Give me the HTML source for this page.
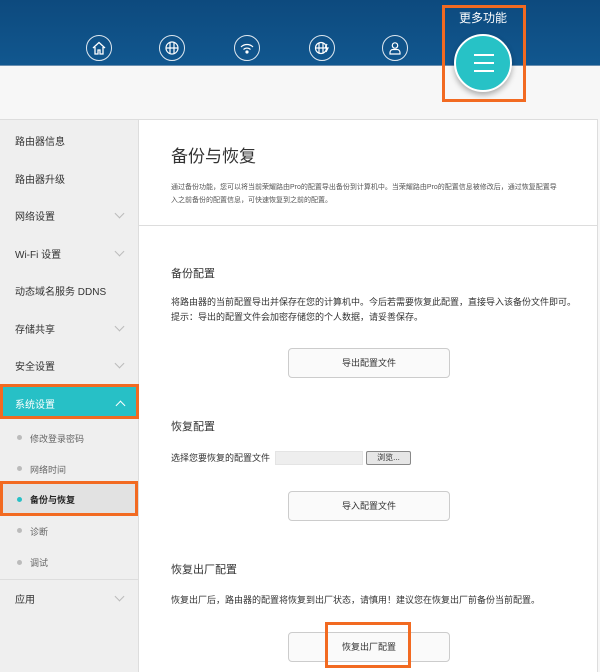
<!DOCTYPE html>
<html><head><meta charset="utf-8"><style>
*{margin:0;padding:0;box-sizing:border-box}
body{width:600px;height:672px;overflow:hidden;background:#f7f7f7;font-family:"Liberation Sans","Noto Sans CJK SC",sans-serif;position:relative;color:#333}
.hdr{position:absolute;left:0;top:0;width:600px;height:66px;background:linear-gradient(#0d4a7e,#11578f);border-bottom:1px solid #6a8fb0}
.ic{position:absolute;top:35px;width:26px;height:26px;border:1.3px solid #dfe8f0;border-radius:50%}
.ic svg{position:absolute;left:4px;top:4px}
.side{position:absolute;left:0;top:119px;width:139px;height:553px;background:#efefef;border-right:1px solid #ddd;border-top:1px solid #ddd}
.it{position:absolute;left:15px;font-size:10px;color:#333}
.chev{position:absolute;left:116px;width:7px;height:7px;border-right:1px solid #bbb;border-bottom:1px solid #bbb;transform:rotate(45deg)}
.sub{position:absolute;left:30px;font-size:9px;color:#666}
.dot{position:absolute;left:17px;width:5px;height:5px;border-radius:50%;background:#bbb}
.main{position:absolute;left:139px;top:119px;width:459px;height:553px;background:#fff;border-right:1px solid #ddd;border-top:1px solid #ddd}
.t{position:absolute;left:171px;font-size:11px;color:#333}
.p{position:absolute;left:171px;font-size:9px;color:#333;line-height:15px}
.btn{position:absolute;left:288px;width:162px;height:30px;border:1px solid #ccc;border-radius:4px;background:#fafafa;font-size:9px;text-align:center;line-height:28px;color:#333}
.ob{position:absolute;border:3px solid #f26a21}
</style></head><body>
<div class="hdr">
<div style="position:absolute;left:459px;top:9px;color:#fff;font-size:12px">更多功能</div>
<div class="ic" style="left:86px"><svg width="16" height="16" viewBox="0 0 16 16" fill="none" stroke="#fff" stroke-width="1.3"><path d="M2 8 L8 2.5 L14 8 M4 7 V14 H7 V10 H9 V14 H12 V7"/></svg></div>
<div class="ic" style="left:159px"><svg width="16" height="16" viewBox="0 0 16 16" fill="none" stroke="#fff" stroke-width="1.2"><circle cx="8" cy="8" r="6"/><path d="M6 2.5V13.5M10 2.5V13.5M2 8H14"/></svg></div>
<div class="ic" style="left:234px"><svg width="16" height="16" viewBox="0 0 16 16" fill="none" stroke="#fff" stroke-width="1.2"><path d="M2 7a8.5 8.5 0 0 1 12 0M4.5 9.5a5 5 0 0 1 7 0"/><circle cx="8" cy="12" r="1" fill="#fff"/></svg></div>
<div class="ic" style="left:309px"><svg width="16" height="16" viewBox="0 0 16 16" fill="none" stroke="#fff" stroke-width="1.2"><circle cx="7" cy="8" r="5.5"/><path d="M5 3V13M9 3V13M2 8H12M13 4l-2 4h3l-2 4"/></svg></div>
<div class="ic" style="left:382px"><svg width="16" height="16" viewBox="0 0 16 16" fill="none" stroke="#fff" stroke-width="1.2"><circle cx="8" cy="5.5" r="2.7"/><path d="M3 14v-1.5a3 3 0 0 1 3-3h4a3 3 0 0 1 3 3V14Z"/></svg></div>
</div>
<div style="position:absolute;left:454px;top:34px;width:58px;height:58px;border-radius:50%;background:#27c2c6;border:2px solid #fff;box-shadow:0 3px 6px rgba(0,0,0,.3)">
<div style="position:absolute;left:18px;top:18px;width:20px;height:2px;background:#fff"></div>
<div style="position:absolute;left:18px;top:26px;width:20px;height:2px;background:#fff"></div>
<div style="position:absolute;left:18px;top:34px;width:20px;height:2px;background:#fff"></div>
</div>
<div class="ob" style="left:442px;top:5px;width:84px;height:97px"></div>

<div class="side">
<div class="it" style="top:13px">路由器信息</div>
<div class="it" style="top:51px">路由器升级</div>
<div class="it" style="top:88px">网络设置</div><div class="chev" style="top:90px"></div>
<div class="it" style="top:126px">Wi-Fi 设置</div><div class="chev" style="top:128px"></div>
<div class="it" style="top:163px">动态域名服务 DDNS</div>
<div class="it" style="top:201px">存储共享</div><div class="chev" style="top:203px"></div>
<div class="it" style="top:238px">安全设置</div><div class="chev" style="top:240px"></div>
<div style="position:absolute;left:0;top:264px;width:139px;height:35px;background:#27c0c6;border:3px solid #f26a21"></div>
<div class="it" style="top:276px;color:#fff">系统设置</div>
<div style="position:absolute;left:117px;top:282px;width:7px;height:7px;border-left:1px solid #fff;border-top:1px solid #fff;transform:rotate(45deg)"></div>
<div class="dot" style="top:315px"></div><div class="sub" style="top:312px">修改登录密码</div>
<div class="dot" style="top:346px"></div><div class="sub" style="top:343px">网络时间</div>
<div style="position:absolute;left:0;top:361px;width:138px;height:35px;background:#e2e2e2;border:3px solid #f26a21"></div>
<div class="dot" style="top:377px;background:#27c0c6"></div><div class="sub" style="top:373px;color:#222;font-weight:bold">备份与恢复</div>
<div class="dot" style="top:408px"></div><div class="sub" style="top:405px">诊断</div>
<div class="dot" style="top:440px"></div><div class="sub" style="top:436px">调试</div>
<div style="position:absolute;left:0;top:459px;width:138px;border-top:1px solid #ddd"></div>
<div class="it" style="top:471px">应用</div><div class="chev" style="top:473px"></div>
</div>

<div class="main"><div style="position:absolute;left:0;top:105px;width:459px;border-top:1px solid #ddd"></div></div>
<div style="position:absolute;left:171px;top:142px;font-size:17px;color:#333">备份与恢复</div>
<div class="p" style="top:181px;font-size:7px;line-height:13px;color:#555">通过备份功能，您可以将当前荣耀路由Pro的配置导出备份到计算机中。当荣耀路由Pro的配置信息被修改后，通过恢复配置导<br>入之前备份的配置信息，可快速恢复到之前的配置。</div>
<div class="t" style="top:265px">备份配置</div>
<div class="p" style="top:295px">将路由器的当前配置导出并保存在您的计算机中。今后若需要恢复此配置，直接导入该备份文件即可。<br>提示：导出的配置文件会加密存储您的个人数据，请妥善保存。</div>
<div class="btn" style="top:348px">导出配置文件</div>
<div class="t" style="top:418px">恢复配置</div>
<div class="p" style="top:451px">选择您要恢复的配置文件</div>
<div style="position:absolute;left:275px;top:451px;width:88px;height:14px;background:#eee;border:1px solid #e4e4e4"></div>
<div style="position:absolute;left:366px;top:451px;width:45px;height:14px;background:#e6e6e6;border:1px solid #888;border-radius:2px;font-size:8px;text-align:center;line-height:12px">浏览...</div>
<div class="btn" style="top:491px">导入配置文件</div>
<div class="t" style="top:561px">恢复出厂配置</div>
<div class="p" style="top:593px">恢复出厂后，路由器的配置将恢复到出厂状态，请慎用！建议您在恢复出厂前备份当前配置。</div>
<div class="btn" style="top:632px">恢复出厂配置</div>
<div class="ob" style="left:325px;top:622px;width:86px;height:46px"></div>
</body></html>
